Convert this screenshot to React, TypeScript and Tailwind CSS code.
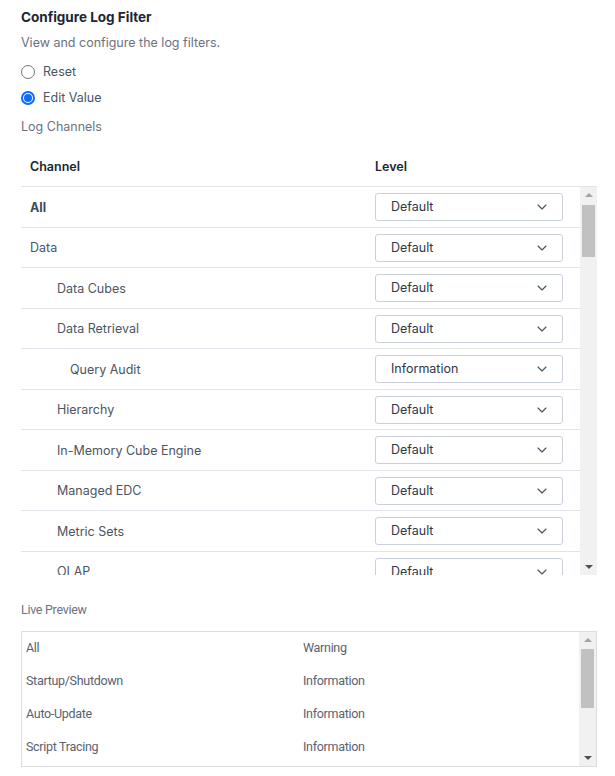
import { ChevronDown } from "lucide-react"

const CHANNELS = [
  { name: "All", level: "Default", indent: 0, bold: true },
  { name: "Data", level: "Default", indent: 0 },
  { name: "Data Cubes", level: "Default", indent: 1 },
  { name: "Data Retrieval", level: "Default", indent: 1 },
  { name: "Query Audit", level: "Information", indent: 2 },
  { name: "Hierarchy", level: "Default", indent: 1 },
  { name: "In-Memory Cube Engine", level: "Default", indent: 1 },
  { name: "Managed EDC", level: "Default", indent: 1 },
  { name: "Metric Sets", level: "Default", indent: 1 },
  { name: "OLAP", level: "Default", indent: 1 },
]

const PREVIEW = [
  { name: "All", level: "Warning" },
  { name: "Startup/Shutdown", level: "Information" },
  { name: "Auto-Update", level: "Information" },
  { name: "Script Tracing", level: "Information" },
]

function FakeScrollbar({ thumbTop, thumbHeight }: { thumbTop: number; thumbHeight: number }) {
  return (
    <div className="relative w-[17px] shrink-0 bg-[#f1f1f1]">
      <div className="absolute left-1/2 top-[6px] -translate-x-1/2 w-0 h-0 border-l-[4px] border-r-[4px] border-b-[4px] border-l-transparent border-r-transparent border-b-[#a3a3a3]" />
      <div className="absolute left-[2px] right-[2px] bg-[#c1c1c1]" style={{ top: thumbTop, height: thumbHeight }} />
      <div className="absolute left-1/2 bottom-[6px] -translate-x-1/2 w-0 h-0 border-l-[4px] border-r-[4px] border-t-[4px] border-l-transparent border-r-transparent border-t-[#505050]" />
    </div>
  )
}

export default function App() {
  return (
    <div className="w-[615px] h-[776px] bg-white px-[21px] pt-[7px] overflow-hidden font-['Inter',sans-serif] text-[12.5px]">
      <h2 className="h-[20px] leading-[20px] text-[13.5px] font-bold text-[#1b2533]">Configure Log Filter</h2>
      <p className="mt-[6px] h-[20px] leading-[20px] text-[#6b7280]">View and configure the log filters.</p>

      {/* Mode */}
      <div className="mt-[9px] flex flex-col gap-[6px]">
        <label className="flex items-center gap-[8px] h-[20px] text-[#4b5563]">
          <span className="w-[14px] h-[14px] rounded-full border border-[#767676] bg-white" />
          Reset
        </label>
        <label className="flex items-center gap-[8px] h-[20px] text-[#4b5563]">
          <span className="w-[14px] h-[14px] rounded-full border-2 border-[#0b6cff] bg-white flex items-center justify-center">
            <span className="w-[8px] h-[8px] rounded-full bg-[#0b6cff]" />
          </span>
          Edit Value
        </label>
      </div>

      <p className="mt-[9px] h-[20px] leading-[20px] text-[#6b7280]">Log Channels</p>

      {/* Channels table */}
      <div className="w-[576px]">
        <div className="h-[50px] flex items-end pb-[9px] border-b border-[#e2e3ea] font-semibold text-[#1b2533]">
          <div className="w-[354px] pl-[9px]">Channel</div>
          <div>Level</div>
        </div>
        <div className="flex h-[388px]">
          <div className="flex-1 overflow-hidden">
            {CHANNELS.map((c) => (
              <div key={c.name} className="h-[40.5px] flex items-center pt-[1px] border-b border-[#e2e3ea] text-[#4b5563]">
                <div
                  className={`w-[354px] pt-[2px] ${c.bold ? "font-bold text-[#3f4a5a]" : ""} ${
                    c.indent === 0 ? "pl-[9px]" : c.indent === 1 ? "pl-[36px]" : "pl-[49px]"
                  }`}
                >
                  {c.name}
                </div>
                <div className="w-[188px] h-[28px] shrink-0 rounded-[3px] border border-[#c9d0db] bg-white flex items-center justify-between pl-[15px] pr-[12px] text-[#2d3748]">
                  <span className="pt-[1px]">{c.level}</span>
                  <ChevronDown size={16} strokeWidth={1.75} className="text-[#4a5568]" />
                </div>
              </div>
            ))}
          </div>
          <FakeScrollbar thumbTop={18} thumbHeight={52} />
        </div>
      </div>

      <p className="mt-[25px] h-[20px] leading-[20px] text-[12.5px] tracking-[-0.3px] text-[#6b7280] font-['Roboto',sans-serif]">
        Live Preview
      </p>

      {/* Preview */}
      <div className="mt-[11px] w-[576px] h-[136px] border border-[#dcdcdc] flex font-['Roboto',sans-serif] text-[12.5px] tracking-[-0.3px] text-[#5a6270]">
        <div className="flex-1">
          {PREVIEW.map((p) => (
            <div key={p.name} className="h-[33px] flex items-center">
              <div className="w-[281px] pl-[4px]">{p.name}</div>
              <div>{p.level}</div>
            </div>
          ))}
        </div>
        <FakeScrollbar thumbTop={17} thumbHeight={59} />
      </div>
    </div>
  )
}
